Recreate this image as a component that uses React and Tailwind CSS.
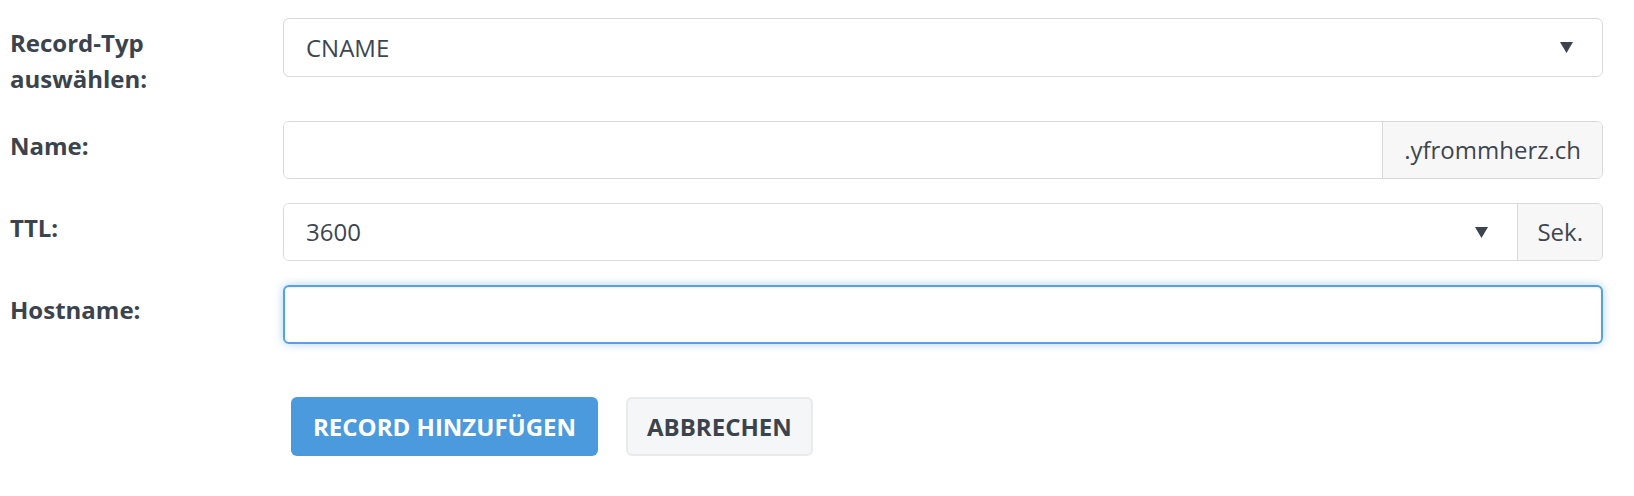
import React from 'react';

function Arrow() {
  return (
    <svg width="13" height="11" viewBox="0 0 13 11" className="shrink-0">
      <polygon points="0,0 13,0 6.5,11" fill="#3b434c" />
    </svg>
  );
}

function Row({ label, children }) {
  return (
    <div className="flex items-start mb-[24px]">
      <label className="w-[273px] shrink-0 pt-[7px] pr-6 text-[24px] leading-[36px] font-bold text-[#3b434c]">
        {label}
      </label>
      <div className="flex-1">{children}</div>
    </div>
  );
}

export default function App() {
  return (
    <div className="bg-white min-h-[496px] pl-[10px] pr-[31px] pt-[18px]" style={{ fontFamily: '"Open Sans", "Liberation Sans", sans-serif' }}>
      <Row label={<>Record-Typ<br />auswählen:</>}>
        <div className="h-[59px] flex items-center justify-between pl-[22px] pr-[29px] border border-[#d9d9d9] rounded-[6px] bg-white text-[24px] text-[#3d4650]">
          <span>CNAME</span>
          <Arrow />
        </div>
      </Row>

      <Row label="Name:">
        <div className="h-[58px] flex border border-[#d9d9d9] rounded-[6px] overflow-hidden">
          <input type="text" className="flex-1 min-w-0 px-[22px] text-[24px] text-[#3d4650] bg-white outline-none" />
          <div className="flex items-center px-[21px] border-l border-[#d9d9d9] bg-[#f7f7f7] text-[24px] text-[#3d4650]">
            .yfrommherz.ch
          </div>
        </div>
      </Row>

      <Row label="TTL:">
        <div className="h-[58px] flex border border-[#d9d9d9] rounded-[6px] overflow-hidden">
          <div className="flex-1 flex items-center justify-between pl-[22px] pr-[29px] bg-white text-[24px] text-[#3d4650]">
            <span>3600</span>
            <Arrow />
          </div>
          <div className="flex items-center px-[19px] border-l border-[#d9d9d9] bg-[#f7f7f7] text-[24px] text-[#3d4650]">
            Sek.
          </div>
        </div>
      </Row>

      <Row label="Hostname:">
        <input
          type="text"
          className="w-full h-[59px] px-[22px] text-[24px] text-[#3d4650] bg-white rounded-[6px] border-2 border-[#55a2e2] outline-none shadow-[inset_0_1px_2px_rgba(0,0,0,0.08),0_0_10px_rgba(85,162,226,0.45)]"
        />
      </Row>

      <div className="flex gap-[28px] pl-[281px] pt-[29px]">
        <button className="h-[59px] px-[22px] rounded-[6px] bg-[#4a9add] text-white text-[24px] font-bold uppercase">
          Record hinzufügen
        </button>
        <button className="h-[59px] px-[19px] rounded-[6px] bg-[#f5f6f7] border-2 border-[#e9eaeb] text-[#3b434c] text-[24px] font-bold uppercase">
          Abbrechen
        </button>
      </div>
    </div>
  );
}
